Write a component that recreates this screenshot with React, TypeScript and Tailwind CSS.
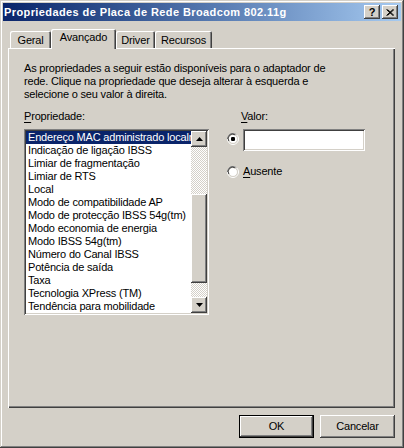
import React from 'react'

const raised =
  'shadow-[inset_-1px_-1px_#404040,inset_1px_1px_#ffffff,inset_-2px_-2px_#808080,inset_2px_2px_#d4d0c8]'
const sunken =
  'shadow-[inset_1px_1px_#808080,inset_-1px_-1px_#ffffff,inset_2px_2px_#404040,inset_-2px_-2px_#d4d0c8]'

const items = [
  'Endereço MAC administrado localmente',
  'Indicação de ligação IBSS',
  'Limiar de fragmentação',
  'Limiar de RTS',
  'Local',
  'Modo de compatibilidade AP',
  'Modo de protecção IBSS 54g(tm)',
  'Modo economia de energia',
  'Modo IBSS 54g(tm)',
  'Número do Canal IBSS',
  'Potência de saída',
  'Taxa',
  'Tecnologia XPress (TM)',
  'Tendência para mobilidade',
]

function Radio({ checked }: { checked?: boolean }) {
  return (
    <svg width="12" height="12" viewBox="0 0 12 12" className="shrink-0">
      <circle cx="6" cy="6" r="5.5" fill="none" stroke="#ffffff" strokeWidth="1" />
      <path d="M0.5 6 A5.5 5.5 0 0 1 6 0.5" stroke="#808080" strokeWidth="1" fill="none" />
      <path d="M1.6 2.6 A5.5 5.5 0 0 1 9.4 1.6" stroke="#808080" strokeWidth="1" fill="none" />
      <circle cx="6" cy="6" r="4.5" fill="#ffffff" stroke="#d4d0c8" strokeWidth="1" />
      <path d="M1.8 8 A4.5 4.5 0 0 1 8 1.8" stroke="#404040" strokeWidth="1" fill="none" />
      {checked && <rect x="4" y="4" width="4" height="4" rx="1.2" fill="#000" />}
    </svg>
  )
}

function Arrow({ up }: { up?: boolean }) {
  return (
    <div className={`w-[16px] h-[16px] bg-[#d4d0c8] flex items-center justify-center ${raised}`}>
      <svg width="7" height="4" viewBox="0 0 7 4">
        {up ? <path d="M3.5 0 L7 4 L0 4 Z" fill="#000" /> : <path d="M0 0 L7 0 L3.5 4 Z" fill="#000" />}
      </svg>
    </div>
  )
}

function Tab({ label, w, active }: { label: string; w: string; active?: boolean }) {
  return (
    <div
      className={`${w} ${
        active ? 'h-[20px] -mb-[1px] relative z-10 pt-[2px]' : 'h-[17px] pt-[3px]'
      } bg-[#d4d0c8] rounded-t-[2px] text-center leading-[13px] shadow-[inset_1px_1px_#ffffff,inset_-1px_0_#404040,inset_-2px_0_#808080]`}
    >
      {label}
    </div>
  )
}

function Button({ label, isDefault }: { label: string; isDefault?: boolean }) {
  return (
    <div
      className={`w-[75px] h-[23px] bg-[#d4d0c8] flex items-center justify-center ${
        isDefault
          ? 'shadow-[inset_0_0_0_1px_#000000,inset_-2px_-2px_#404040,inset_2px_2px_#ffffff,inset_-3px_-3px_#808080]'
          : raised
      }`}
    >
      {label}
    </div>
  )
}

export default function App() {
  return (
    <div className="w-[404px] h-[448px] bg-[#d4d0c8] p-[3px] flex flex-col font-['Liberation_Sans',Arial,sans-serif] text-[11px] tracking-[-0.18px] text-black shadow-[inset_-1px_-1px_#404040,inset_1px_1px_#d4d0c8,inset_-2px_-2px_#808080,inset_2px_2px_#ffffff]">
      {/* Title bar */}
      <div className="h-[18px] shrink-0 flex items-center pl-[1px] pr-[3px] bg-gradient-to-r from-[#0a246a] to-[#a6caf0]">
        <span className="text-white font-bold text-[11px] tracking-[0.4px] whitespace-nowrap">
          Propriedades de Placa de Rede Broadcom 802.11g
        </span>
        <div className="ml-auto flex gap-[2px]">
          <div className={`w-[16px] h-[14px] bg-[#d4d0c8] flex items-center justify-center font-bold text-[11px] leading-none ${raised}`}>
            ?
          </div>
          <div className={`w-[16px] h-[14px] bg-[#d4d0c8] flex items-center justify-center ${raised}`}>
            <svg width="8" height="7" viewBox="0 0 8 7">
              <path d="M0.5 0.5 L7 6.5 M1.5 0.5 L8 6.5 M7 0.5 L0.5 6.5 M8 0.5 L1.5 6.5" stroke="#000" strokeWidth="1" />
            </svg>
          </div>
        </div>
      </div>

      {/* Tabs */}
      <div className="mt-[8px] ml-[7px] h-[19px] shrink-0 flex items-end">
        <Tab label="Geral" w="w-[41px]" />
        <Tab label="Avançado" w="w-[65px]" active />
        <Tab label="Driver" w="w-[39px]" />
        <Tab label="Recursos" w="w-[57px]" />
      </div>

      {/* Panel */}
      <div className="ml-[5px] mr-[6px] h-[360px] shrink-0 pt-[14px] pl-[16px] shadow-[inset_1px_1px_#ffffff,inset_-1px_-1px_#404040,inset_-2px_-2px_#808080]">
        <p className="leading-[13px] whitespace-nowrap">
          As propriedades a seguir estão disponíveis para o adaptador de
          <br />
          rede. Clique na propriedade que deseja alterar à esquerda e
          <br />
          selecione o seu valor à direita.
        </p>

        <div className="mt-[9px] flex">
          {/* Property list */}
          <div className="w-[185px] flex flex-col">
            <div className="leading-[13px]">
              <span className="underline underline-offset-2">P</span>ropriedade:
            </div>
            <div className={`mt-[6px] h-[186px] p-[2px] bg-white flex ${sunken}`}>
              <div className="w-[165px] overflow-hidden">
                {items.map((it, i) => (
                  <div
                    key={it}
                    className={`h-[13px] leading-[13px] pl-[2px] whitespace-nowrap ${
                      i === 0 ? 'bg-[#0a246a] text-white' : ''
                    }`}
                  >
                    {it}
                  </div>
                ))}
              </div>
              <div className="w-[16px] flex flex-col">
                <Arrow up />
                <div className="flex-1 flex flex-col bg-[repeating-conic-gradient(#ffffff_0%_25%,#d4d0c8_0%_50%)] bg-[length:2px_2px]">
                  <div className="h-[47px]" />
                  <div className={`h-[89px] bg-[#d4d0c8] ${raised}`} />
                </div>
                <Arrow />
              </div>
            </div>
          </div>

          {/* Value */}
          <div className="ml-[18px] flex flex-col">
            <div className="pl-[14px] leading-[13px]">
              <span className="underline underline-offset-2">V</span>alor:
            </div>
            <div className="mt-[6px] flex items-start">
              <div className="mt-[4px]">
                <Radio checked />
              </div>
              <div className={`ml-[4px] w-[122px] h-[22px] bg-white ${sunken}`} />
            </div>
            <div className="mt-[14px] flex items-center h-[13px]">
              <Radio />
              <span className="ml-[4px] leading-[13px]">
                <span className="underline underline-offset-2">A</span>usente
              </span>
            </div>
          </div>
        </div>
      </div>

      {/* Buttons */}
      <div className="mt-[7px] mr-[6px] flex justify-end gap-[6px]">
        <Button label="OK" isDefault />
        <Button label="Cancelar" />
      </div>
    </div>
  )
}
